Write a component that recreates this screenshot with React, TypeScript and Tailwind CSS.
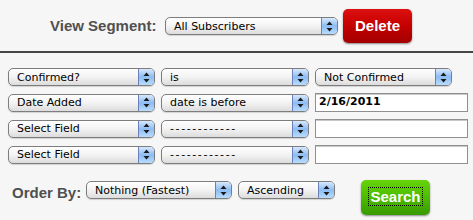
import React from 'react';

const font = { fontFamily: '"DejaVu Sans", Verdana, sans-serif' };
const boldFont = { fontFamily: '"Liberation Sans", Arial, sans-serif' };

function Arrows() {
  return (
    <svg width="7" height="11" viewBox="0 0 7 11" className="block">
      <path d="M3.5 0.5 L6.5 4 L0.5 4 Z" fill="#1a1a1a" />
      <path d="M3.5 10.5 L6.5 7 L0.5 7 Z" fill="#1a1a1a" />
    </svg>
  );
}

function Select({ label, className, dashed }: { label: string; className: string; dashed?: boolean }) {
  return (
    <div
      className={`flex h-[18px] shrink-0 items-stretch overflow-hidden rounded-[5px] border border-[#7d7d7d] bg-gradient-to-b from-white via-[#f3f3f3] to-[#dcdcdc] shadow-[0_1px_1px_rgba(0,0,0,0.15)] ${className}`}
    >
      <span
        className={`flex flex-1 items-center whitespace-nowrap pl-[8px] text-[11px] leading-none text-black ${dashed ? 'tracking-[1.6px]' : ''}`}
      >
        {label}
      </span>
      <span className="flex w-[16px] items-center justify-center border-l border-[#6b7fb8] bg-gradient-to-b from-[#d8e8fc] via-[#8cbcf3] to-[#b9dcfd]">
        <Arrows />
      </span>
    </div>
  );
}

function TextBox({ value }: { value?: string }) {
  return (
    <div className="flex h-[19px] w-[153px] shrink-0 items-center border border-[#8f8f8f] bg-white pl-[3px] text-[11px] font-bold text-black shadow-[inset_0_1px_0_#c9c9c9]">
      {value}
    </div>
  );
}

export default function App() {
  return (
    <div className="h-[220px] w-[473px] overflow-hidden bg-[#f6f6f6]" style={font}>
      <div className="box-content flex h-[34px] items-center pl-[50px] pt-[9px]">
        <span className="w-[115px] whitespace-nowrap text-[15px] font-bold text-[#505050]" style={boldFont}>
          View Segment:
        </span>
        <Select label="All Subscribers" className="w-[173px]" />
        <button
          className="ml-[5px] h-[34px] w-[69px] rounded-[5px] bg-gradient-to-b from-[#dd1010] via-[#c40000] to-[#a30000] text-[15px] font-bold text-white shadow-[0_1px_2px_rgba(0,0,0,0.45)]"
          style={boldFont}
        >
          Delete
        </button>
      </div>
      <div className="mt-[8px] h-[2px] border-t-[2px] border-[#464646]" />
      <div className="mt-[15px] flex flex-col gap-[7px] pl-[8px]">
        <div className="flex items-center gap-[6px]">
          <Select label="Confirmed?" className="w-[147px]" />
          <Select label="is" className="w-[148px]" />
          <Select label="Not Confirmed" className="w-[137px]" />
        </div>
        <div className="flex items-center gap-[6px]">
          <Select label="Date Added" className="w-[147px]" />
          <Select label="date is before" className="w-[148px]" />
          <TextBox value="2/16/2011" />
        </div>
        <div className="flex items-center gap-[6px]">
          <Select label="Select Field" className="w-[147px]" />
          <Select label="------------" className="w-[148px]" dashed />
          <TextBox />
        </div>
        <div className="flex items-center gap-[6px]">
          <Select label="Select Field" className="w-[147px]" />
          <Select label="------------" className="w-[148px]" dashed />
          <TextBox />
        </div>
      </div>
      <div className="mt-[17px] flex items-start pl-[12px]">
        <span className="mt-[1px] w-[74px] whitespace-nowrap text-[15px] font-bold text-[#505050]" style={boldFont}>
          Order By:
        </span>
        <Select label="Nothing (Fastest)" className="w-[146px]" />
        <Select label="Ascending" className="ml-[6px] w-[97px]" />
        <button
          className="ml-[26px] -mt-[1px] h-[35px] w-[69px] rounded-[5px] bg-gradient-to-b from-[#66d40a] via-[#4cbc00] to-[#389a00] text-[15px] font-bold text-white shadow-[0_1px_2px_rgba(0,0,0,0.45)]"
          style={boldFont}
        >
          <span className="border border-dotted border-black px-[1px]">Search</span>
        </button>
      </div>
    </div>
  );
}
